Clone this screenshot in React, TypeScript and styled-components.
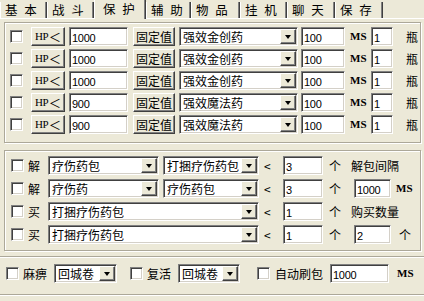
import styled, { createGlobalStyle, css } from 'styled-components'

const GlobalStyle = createGlobalStyle`
  * { box-sizing: border-box; }
  html, body {
    margin: 0;
    padding: 0;
    background: #ece9d8;
  }
  body {
    width: 424px;
    height: 301px;
    overflow: hidden;
    font-family: "Noto Sans CJK SC", "Liberation Sans", sans-serif;
    font-size: 12px;
    color: #000;
  }
`

const sunken = css`
	border: 1px solid;
	border-color: #808080 #fff #fff #808080;
	box-shadow: inset 1px 1px 0 #404040, inset -1px -1px 0 #d4d0c8;
`

const raised = css`
	border: 1px solid;
	border-color: #fff #404040 #404040 #fff;
	box-shadow: inset -1px -1px 0 #808080;
	background: #ece9d8;
`

type Offset = { $ml?: number; $w?: number }

const TabBar = styled.div`
	display: flex;
	align-items: flex-end;
	height: 19px;
	border-bottom: 1px solid #fff;
`

const Tab = styled.div<{ $active?: boolean; $w: number }>`
	width: ${(p) => p.$w}px;
	height: ${(p) => (p.$active ? 19 : 16)}px;
	margin-bottom: ${(p) => (p.$active ? -1 : 0)}px;
	border-left: 1px solid #fff;
	border-right: 1px solid #404040;
	box-shadow: inset -1px 0 0 #808080;
	background: #ece9d8;
	font-size: 12.5px;
	letter-spacing: 2px;
	line-height: 15px;
	padding-top: ${(p) => (p.$active ? 1 : 0)}px;
	padding-left: ${(p) => (p.$active ? 8 : 4)}px;
	white-space: nowrap;
`

const Page = styled.div`
	display: flex;
	flex-direction: column;
`

const GroupBox = styled.div<{ $mt: number; $ml: number; $w: number; $pt: number; $pb: number; $gap: number }>`
	margin-top: ${(p) => p.$mt}px;
	margin-left: ${(p) => p.$ml}px;
	width: ${(p) => p.$w}px;
	padding-top: ${(p) => p.$pt}px;
	padding-bottom: ${(p) => p.$pb}px;
	display: flex;
	flex-direction: column;
	gap: ${(p) => p.$gap}px;
	border: 1px solid #aca899;
	box-shadow: inset 1px 1px 0 #fff, 1px 1px 0 #fff;
`

const Row = styled.div`
	display: flex;
	align-items: center;
	height: 19px;
`

const CheckBox = styled.div<Offset>`
	flex: none;
	width: 13px;
	height: 13px;
	margin-left: ${(p) => p.$ml ?? 0}px;
	background: #fff;
	${sunken}
`

const Button = styled.div<Offset>`
	flex: none;
	width: ${(p) => p.$w}px;
	height: 19px;
	margin-left: ${(p) => p.$ml ?? 0}px;
	${raised}
	display: flex;
	align-items: center;
	justify-content: center;
	font-size: 12px;
	line-height: 1;
`

const HpText = styled.span`
	font-family: "Liberation Serif", serif;
	font-size: 11px;
	letter-spacing: -0.5px;
	margin-right: 1px;
`

const Edit = styled.div<Offset>`
	flex: none;
	width: ${(p) => p.$w}px;
	height: 19px;
	margin-left: ${(p) => p.$ml ?? 0}px;
	background: #fff;
	${sunken}
	padding: 3px 0 0 2px;
	font-family: "Liberation Sans", sans-serif;
	font-size: 11px;
	letter-spacing: -0.3px;
	line-height: 14px;
	white-space: nowrap;
	overflow: hidden;
`

const Combo = styled.div<Offset>`
	flex: none;
	width: ${(p) => p.$w}px;
	height: 19px;
	margin-left: ${(p) => p.$ml ?? 0}px;
	background: #fff;
	${sunken}
	display: flex;
	padding: 1px;
`

const ComboText = styled.div`
	flex: 1;
	padding-left: 2px;
	font-size: 12px;
	line-height: 16px;
	white-space: nowrap;
	overflow: hidden;
`

const DropButton = styled.div`
	flex: none;
	width: 16px;
	height: 15px;
	margin: 0 0 0 auto;
	${raised}
	display: flex;
	align-items: center;
	justify-content: center;

	&::after {
		content: '';
		border-left: 3.5px solid transparent;
		border-right: 3.5px solid transparent;
		border-top: 4px solid #000;
		margin-top: 1px;
	}
`

const Label = styled.span<Offset & { $latin?: boolean }>`
	flex: none;
	margin-left: ${(p) => p.$ml ?? 0}px;
	width: ${(p) => (p.$w ? `${p.$w}px` : 'auto')};
	font-family: ${(p) =>
		p.$latin ? '"Liberation Serif", serif' : '"Noto Sans CJK SC", sans-serif'};
	font-size: ${(p) => (p.$latin ? 11 : 12)}px;
	font-weight: ${(p) => (p.$latin ? 'bold' : 'normal')};
	line-height: 19px;
	white-space: nowrap;
`

const BottomBar = styled.div`
	margin-top: 5px;
	height: 39px;
	padding-top: 7px;
	border-top: 1px solid #aca899;
	border-bottom: 1px solid #aca899;
	box-shadow: inset 0 1px 0 #fff, 0 1px 0 #fff;
`

const tabs = [
	{ label: '基 本', w: 47 },
	{ label: '战 斗', w: 47 },
	{ label: '保 护', w: 52, active: true },
	{ label: '辅 助', w: 45 },
	{ label: '物 品', w: 49 },
	{ label: '挂 机', w: 47 },
	{ label: '聊 天', w: 48 },
	{ label: '保 存', w: 48 }
]

const protectRows = [
	{ value: '1000', item: '强效金创药' },
	{ value: '1000', item: '强效金创药' },
	{ value: '1000', item: '强效金创药' },
	{ value: '900', item: '强效魔法药' },
	{ value: '900', item: '强效魔法药' }
]

const DropCombo = ({ text, w, ml }: { text: string; w: number; ml: number }) => (
	<Combo $w={w} $ml={ml}>
		<ComboText>{text}</ComboText>
		<DropButton />
	</Combo>
)

export default function App() {
	return (
		<>
			<GlobalStyle />
			<TabBar>
				{tabs.map((t) => (
					<Tab key={t.label} $w={t.w} $active={t.active}>
						{t.label}
					</Tab>
				))}
			</TabBar>
			<Page>
				<GroupBox $mt={3} $ml={4} $w={417} $pt={4} $pb={8} $gap={3}>
					{protectRows.map((r, i) => (
						<Row key={i}>
							<CheckBox $ml={5} />
							<Button $w={34} $ml={8}>
								<HpText>HP</HpText>＜
							</Button>
							<Edit $w={59} $ml={4}>
								{r.value}
							</Edit>
							<Button $w={42} $ml={5}>
								固定值
							</Button>
							<DropCombo text={r.item} w={119} ml={4} />
							<Edit $w={44} $ml={3}>
								100
							</Edit>
							<Label $latin $ml={5} $w={16}>
								MS
							</Label>
							<Edit $w={22} $ml={5}>
								1
							</Edit>
							<Label $ml={13}>瓶</Label>
						</Row>
					))}
				</GroupBox>

				<GroupBox $mt={7} $ml={4} $w={417} $pt={5} $pb={6} $gap={4}>
					<Row>
						<CheckBox $ml={6} />
						<Label $ml={4} $w={13}>
							解
						</Label>
						<DropCombo text='疗伤药包' w={111} ml={7} />
						<DropCombo text='打捆疗伤药包' w={96} ml={4} />
						<Label $ml={5} $w={8}>
							&lt;
						</Label>
						<Edit $w={40} $ml={11}>
							3
						</Edit>
						<Label $ml={6} $w={12}>
							个
						</Label>
						<Label $ml={10}>解包间隔</Label>
					</Row>
					<Row>
						<CheckBox $ml={6} />
						<Label $ml={4} $w={13}>
							解
						</Label>
						<DropCombo text='疗伤药' w={111} ml={7} />
						<DropCombo text='疗伤药包' w={96} ml={4} />
						<Label $ml={5} $w={8}>
							&lt;
						</Label>
						<Edit $w={40} $ml={11}>
							3
						</Edit>
						<Label $ml={6} $w={12}>
							个
						</Label>
						<Edit $w={37} $ml={13}>
							1000
						</Edit>
						<Label $latin $ml={5}>
							MS
						</Label>
					</Row>
					<Row>
						<CheckBox $ml={6} />
						<Label $ml={4} $w={13}>
							买
						</Label>
						<DropCombo text='打捆疗伤药包' w={211} ml={7} />
						<Label $ml={5} $w={8}>
							&lt;
						</Label>
						<Edit $w={40} $ml={11}>
							1
						</Edit>
						<Label $ml={6} $w={12}>
							个
						</Label>
						<Label $ml={10}>购买数量</Label>
					</Row>
					<Row>
						<CheckBox $ml={6} />
						<Label $ml={4} $w={13}>
							买
						</Label>
						<DropCombo text='打捆疗伤药包' w={211} ml={7} />
						<Label $ml={5} $w={8}>
							&lt;
						</Label>
						<Edit $w={40} $ml={11}>
							1
						</Edit>
						<Label $ml={6} $w={12}>
							个
						</Label>
						<Edit $w={37} $ml={13}>
							2
						</Edit>
						<Label $ml={8}>个</Label>
					</Row>
				</GroupBox>

				<BottomBar>
					<Row>
						<CheckBox $ml={6} />
						<Label $ml={4} $w={24}>
							麻痹
						</Label>
						<DropCombo text='回城卷' w={63} ml={7} />
						<CheckBox $ml={13} />
						<Label $ml={4} $w={24}>
							复活
						</Label>
						<DropCombo text='回城卷' w={62} ml={7} />
						<CheckBox $ml={17} />
						<Label $ml={5} $w={48}>
							自动刷包
						</Label>
						<Edit $w={59} $ml={7}>
							1000
						</Edit>
						<Label $latin $ml={8}>
							MS
						</Label>
					</Row>
				</BottomBar>
			</Page>
		</>
	)
}
